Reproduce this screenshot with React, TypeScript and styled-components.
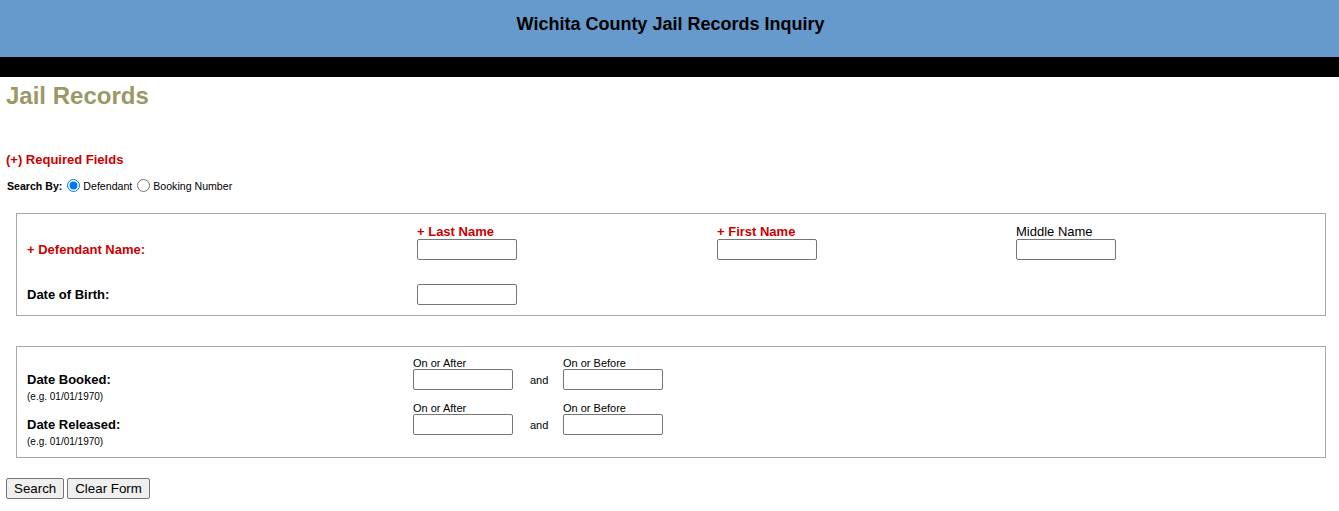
import React from "react";
import styled, { createGlobalStyle } from "styled-components";

const GlobalStyle = createGlobalStyle`
  html, body { margin: 0; padding: 0; background: #fff; }
  body { font-family: "Liberation Sans", Arial, sans-serif; color: #000; }
`;

const Header = styled.header`
  height: 57px;
  box-sizing: border-box;
  padding-top: 14px;
  background: #6699cc;
  text-align: center;
`;

const HeaderTitle = styled.div`
  font-size: 18px;
  line-height: 21px;
  font-weight: bold;
  color: #000;
  padding-left: 2px;
`;

const BlackBar = styled.div`
  height: 20px;
  background: #000;
`;

const Main = styled.main`
  padding: 0 6px;
`;

const PageTitle = styled.h1`
  margin: 5px 0 0;
  font-size: 24px;
  line-height: 28px;
  font-weight: bold;
  color: #999966;
`;

const Required = styled.div`
  margin-top: 42px;
  font-size: 13px;
  line-height: 15px;
  font-weight: bold;
  color: #cc0000;
`;

const SearchRow = styled.div`
  margin-top: 10px;
  height: 17px;
  display: flex;
  align-items: center;
  font-size: 10.6px;
  padding-left: 1px;
`;

const SearchLabel = styled.span`
  font-weight: bold;
`;

const Radio = styled.input`
  width: 13px;
  height: 13px;
  margin: 0 3px 0 5px;
  accent-color: #0075ff;
`;

const Box = styled.div<{ $top: number; $padTop: number; $padBottom: number }>`
  margin: ${(p) => p.$top}px 7px 0 10px;
  border: 1px solid #a9a9a9;
  padding: ${(p) => p.$padTop}px 10px ${(p) => p.$padBottom}px 10px;
`;

const NameGrid = styled.div`
  display: grid;
  grid-template-columns: 390px 300px 299px 1fr;
  grid-template-rows: 36px 21px;
  row-gap: 24px;
  align-items: end;
`;

const RowLabel = styled.div<{ $required?: boolean }>`
  align-self: end;
  font-size: 13px;
  line-height: 21px;
  font-weight: bold;
  color: ${(p) => (p.$required ? "#cc0000" : "#000")};
`;

const FieldCell = styled.div`
  display: flex;
  flex-direction: column;
  align-items: flex-start;
`;

const FieldLabel = styled.span<{ $required?: boolean }>`
  font-size: 13px;
  line-height: 15px;
  font-weight: ${(p) => (p.$required ? "bold" : "normal")};
  color: ${(p) => (p.$required ? "#cc0000" : "#000")};
`;

const TextInput = styled.input`
  box-sizing: border-box;
  width: 100px;
  height: 21px;
  margin: 0;
  padding: 1px 2px;
  border: 1px solid #767676;
  border-radius: 2px;
  background: #fff;
  font-family: "Liberation Sans", Arial, sans-serif;
  font-size: 13px;
`;

const DateGrid = styled.div`
  display: grid;
  grid-template-columns: 386px auto;
  grid-template-rows: 45px 45px;
  align-items: start;
`;

const DateLabelCell = styled.div`
  padding-top: 16px;
  display: flex;
  flex-direction: column;
`;

const DateLabel = styled.span`
  font-size: 13px;
  line-height: 15px;
  font-weight: bold;
`;

const Example = styled.span`
  margin-top: 4px;
  font-size: 10px;
  line-height: 12px;
`;

const Range = styled.div`
  display: grid;
  grid-template-columns: 100px 50px 100px;
  grid-template-rows: 13px 21px;
  align-items: center;
`;

const SmallLabel = styled.span<{ $col: number }>`
  grid-row: 1;
  grid-column: ${(p) => p.$col};
  font-size: 11px;
  line-height: 13px;
  padding-top: 1px;
`;

const RangeInput = styled(TextInput)<{ $col: number }>`
  grid-row: 2;
  grid-column: ${(p) => p.$col};
`;

const And = styled.span`
  grid-row: 2;
  grid-column: 2;
  padding-left: 17px;
  font-size: 11px;
`;

const Buttons = styled.div`
  margin-top: 20px;
  display: flex;
  gap: 3px;
`;

const Button = styled.button`
  box-sizing: border-box;
  height: 21px;
  margin: 0;
  padding: 1px 7px;
  border: 1px solid #767676;
  border-radius: 2px;
  background: #efefef;
  color: #000;
  font-family: "Liberation Sans", Arial, sans-serif;
  font-size: 13.33px;
  line-height: 15px;
`;

const DateRange: React.FC = () => (
  <Range>
    <SmallLabel $col={1}>On or After</SmallLabel>
    <SmallLabel $col={3}>On or Before</SmallLabel>
    <RangeInput $col={1} type="text" />
    <And>and</And>
    <RangeInput $col={3} type="text" />
  </Range>
);

export default function App() {
  return (
    <>
      <GlobalStyle />
      <Header>
        <HeaderTitle>Wichita County Jail Records Inquiry</HeaderTitle>
      </Header>
      <BlackBar />
      <Main>
        <PageTitle>Jail Records</PageTitle>
        <Required>(+) Required Fields</Required>
        <SearchRow>
          <SearchLabel>Search By:</SearchLabel>
          <Radio type="radio" name="by" defaultChecked />
          <span>Defendant</span>
          <Radio type="radio" name="by" />
          <span>Booking Number</span>
        </SearchRow>

        <Box $top={19} $padTop={10} $padBottom={10}>
          <NameGrid>
            <RowLabel $required>+ Defendant Name:</RowLabel>
            <FieldCell>
              <FieldLabel $required>+ Last Name</FieldLabel>
              <TextInput type="text" />
            </FieldCell>
            <FieldCell>
              <FieldLabel $required>+ First Name</FieldLabel>
              <TextInput type="text" />
            </FieldCell>
            <FieldCell>
              <FieldLabel>Middle Name</FieldLabel>
              <TextInput type="text" />
            </FieldCell>
            <RowLabel>Date of Birth:</RowLabel>
            <FieldCell>
              <TextInput type="text" />
            </FieldCell>
          </NameGrid>
        </Box>

        <Box $top={30} $padTop={9} $padBottom={11}>
          <DateGrid>
            <DateLabelCell>
              <DateLabel>Date Booked:</DateLabel>
              <Example>(e.g. 01/01/1970)</Example>
            </DateLabelCell>
            <DateRange />
            <DateLabelCell>
              <DateLabel>Date Released:</DateLabel>
              <Example>(e.g. 01/01/1970)</Example>
            </DateLabelCell>
            <DateRange />
          </DateGrid>
        </Box>

        <Buttons>
          <Button type="button">Search</Button>
          <Button type="button">Clear Form</Button>
        </Buttons>
      </Main>
    </>
  );
}
